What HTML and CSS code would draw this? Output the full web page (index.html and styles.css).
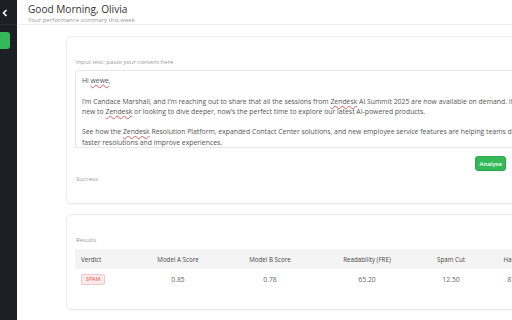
FILE: index.html
```html
<!DOCTYPE html>
<html lang="en">
<head>
  <meta charset="UTF-8" />
  <title>Dashboard</title>
  <link rel="stylesheet" href="styles.css">
</head>
<body>
  <aside class="sidebar">
    <button class="collapse">
      <svg width="6" height="8" viewBox="0 0 6 8"><polyline points="4.5,1 1.5,4 4.5,7" fill="none" stroke="#fff" stroke-width="1.6"/></svg>
    </button>
    <div class="nav-item active"></div>
  </aside>

  <main class="main">
    <header class="topbar">
      <h1>Good Morning, Olivia</h1>
      <p class="sub">Your performance summary this week</p>
    </header>

    <div class="content">
      <section class="card">
        <label class="label">Input text: paste your content here</label>
        <div class="textarea">
          <p>Hi <span class="typo">wewe</span>,</p>
          <p>I’m Candace Marshall, and I’m reaching out to share that all the sessions from <span class="typo">Zendesk</span> AI Summit 2025 are now available on demand. If you’re new to <span class="typo">Zendesk</span> or looking to dive deeper, now’s the perfect time to explore our latest AI-powered products.</p>
          <p>See how the <span class="typo">Zendesk</span> Resolution Platform, expanded Contact Center solutions, and new employee service features are helping teams deliver faster resolutions and improve experiences.</p>
          <p>Watch the sessions today.</p>
        </div>
        <div class="actions">
          <button class="btn-green">Analyse</button>
        </div>
        <p class="status">Success</p>
      </section>

      <section class="card results">
        <p class="label">Results</p>
        <table>
          <thead>
            <tr>
              <th class="c-verdict">Verdict</th>
              <th class="c-a">Model A Score</th>
              <th class="c-b">Model B Score</th>
              <th class="c-read">Readability (FRE)</th>
              <th class="c-spam">Spam Cut</th>
              <th class="c-ham">Ham Cut</th>
            </tr>
          </thead>
          <tbody>
            <tr>
              <td class="c-verdict"><span class="badge">SPAM</span></td>
              <td>0.85</td>
              <td>0.78</td>
              <td>65.20</td>
              <td>12.50</td>
              <td>87.50</td>
            </tr>
          </tbody>
        </table>
      </section>

      <section class="card"></section>
    </div>
  </main>
</body>
</html>
```

FILE: styles.css
```css
body {
  margin: 0;
  display: flex;
  height: 320px;
  overflow: hidden;
  font-family: 'Open Sans', 'Liberation Sans', sans-serif;
  background: #fff;
  color: #333;
}

.sidebar {
  width: 17px;
  flex-shrink: 0;
  background: #1b1f23;
}

.collapse {
  display: block;
  width: 17px;
  height: 25px;
  padding: 0 0 0 2px;
  border: none;
  border-bottom: 1px solid #2a2e33;
  background: none;
  text-align: left;
}

.nav-item.active {
  width: 10px;
  height: 17px;
  margin-top: 7px;
  background: #34b95a;
  border-radius: 0 3px 3px 0;
}

.main {
  flex: 1;
  min-width: 0;
}

.topbar {
  height: 25px;
  box-sizing: border-box;
  padding: 3px 11px 0;
  border-bottom: 1px solid #efefef;
}

.topbar h1 {
  margin: 0;
  font-size: 10.1px;
  font-weight: 500;
  line-height: 13px;
  color: #333;
}

.sub {
  margin: 0;
  font-size: 6px;
  line-height: 8px;
  color: #999;
}

.content {
  display: flex;
  flex-direction: column;
  gap: 10px;
  padding: 11px 0 0 49px;
}

.card {
  width: 490px;
  flex-shrink: 0;
  box-sizing: border-box;
  padding: 21px 9px 19px 8px;
  border: 1px solid #ebebeb;
  border-radius: 6px;
  box-shadow: 0 1px 2px rgba(0,0,0,0.04);
  min-height: 60px;
}

.label {
  display: block;
  margin: 0 0 3px 1px;
  font-size: 6px;
  line-height: 9px;
  color: #999;
}

.textarea {
  height: 78px;
  box-sizing: border-box;
  overflow: hidden;
  padding: 5px 6px 0;
  border: 1px solid #e8e8e8;
  border-radius: 4px 4px 0 0;
  font-size: 6.85px;
  line-height: 10.3px;
  color: #555;
}

.textarea p {
  margin: 0 0 10.3px;
}

.typo {
  text-decoration: underline wavy #e05a5a;
  text-decoration-thickness: 0.5px;
  text-underline-offset: 1px;
}

.actions {
  display: flex;
  justify-content: flex-end;
  padding: 8px 40px 0 0;
}

.btn-green {
  height: 15px;
  padding: 0 3px;
  border: 1px solid #2aa84a;
  border-radius: 3px;
  background: #33b957;
  color: #fff;
  font-family: inherit;
  font-size: 6px;
  font-weight: 600;
}

.status {
  margin: 4px 0 0 1px;
  font-size: 6px;
  line-height: 9px;
  color: #999;
}

.results {
  padding-top: 21px;
  padding-bottom: 20px;
}

.results .label {
  margin-bottom: 4px;
}

table {
  border-collapse: collapse;
  table-layout: fixed;
  width: 473px;
  font-size: 6.2px;
  color: #555;
}

th {
  height: 20px;
  padding: 0;
  background: #f4f4f4;
  font-weight: 400;
  color: #444;
  text-align: center;
}

td {
  height: 20px;
  padding: 0;
  text-align: center;
  color: #666;
  font-size: 6.8px;
}

.c-verdict { width: 57px; text-align: left; padding-left: 6px; box-sizing: border-box; }
.c-a { width: 92px; }
.c-b { width: 92px; }
.c-read { width: 102px; }
.c-spam { width: 66px; }

.badge {
  display: inline-block;
  padding: 0 4px;
  border: 1px solid #f6c4c4;
  border-radius: 2px;
  background: #fdeaea;
  color: #e05555;
  font-size: 5.3px;
  line-height: 9px;
}
```
